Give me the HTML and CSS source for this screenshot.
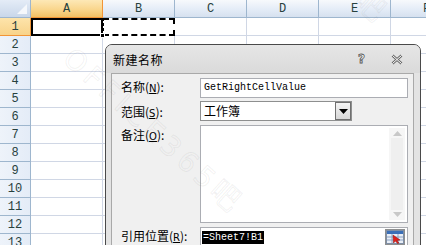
FILE: index.html
```html
<!DOCTYPE html>
<html>
<head>
<meta charset="utf-8">
<link rel="stylesheet" href="styles.css">
</head>
<body>
<div class="sheet">
  <div class="grid">
    <div class="corner"><span class="tri"></span></div>
    <div class="ch sel">A</div>
    <div class="ch">B</div>
    <div class="ch">C</div>
    <div class="ch">D</div>
    <div class="ch">E</div>
    <div class="ch">F</div>

    <div class="rh sel">1</div>
    <div class="c active"><span class="handle"></span></div>
    <div class="c copy"></div>
    <div class="c"></div><div class="c"></div><div class="c"></div><div class="c"></div>

    <div class="rh">2</div><div class="c"></div><div class="c"></div><div class="c"></div><div class="c"></div><div class="c"></div><div class="c"></div>
    <div class="rh">3</div><div class="c"></div><div class="c"></div><div class="c"></div><div class="c"></div><div class="c"></div><div class="c"></div>
    <div class="rh">4</div><div class="c"></div><div class="c"></div><div class="c"></div><div class="c"></div><div class="c"></div><div class="c"></div>
    <div class="rh">5</div><div class="c"></div><div class="c"></div><div class="c"></div><div class="c"></div><div class="c"></div><div class="c"></div>
    <div class="rh">6</div><div class="c"></div><div class="c"></div><div class="c"></div><div class="c"></div><div class="c"></div><div class="c"></div>
    <div class="rh">7</div><div class="c"></div><div class="c"></div><div class="c"></div><div class="c"></div><div class="c"></div><div class="c"></div>
    <div class="rh">8</div><div class="c"></div><div class="c"></div><div class="c"></div><div class="c"></div><div class="c"></div><div class="c"></div>
    <div class="rh">9</div><div class="c"></div><div class="c"></div><div class="c"></div><div class="c"></div><div class="c"></div><div class="c"></div>
    <div class="rh">10</div><div class="c"></div><div class="c"></div><div class="c"></div><div class="c"></div><div class="c"></div><div class="c"></div>
    <div class="rh">11</div><div class="c"></div><div class="c"></div><div class="c"></div><div class="c"></div><div class="c"></div><div class="c"></div>
    <div class="rh">12</div><div class="c"></div><div class="c"></div><div class="c"></div><div class="c"></div><div class="c"></div><div class="c"></div>
    <div class="rh">13</div><div class="c"></div><div class="c"></div><div class="c"></div><div class="c"></div><div class="c"></div><div class="c"></div>
  </div>

  <div class="dialog">
    <div class="titlebar">
      <span class="title">新建名称</span>
      <span class="tbtns">
        <span class="help">?</span>
        <svg class="close" width="12" height="11" viewBox="0 0 12 11">
          <path d="M1.5 1.5 L10.5 9.5 M10.5 1.5 L1.5 9.5" stroke="#666" stroke-width="2.6" fill="none"/>
          <path d="M1.5 1.5 L10.5 9.5 M10.5 1.5 L1.5 9.5" stroke="#fff" stroke-width="1" fill="none"/>
        </svg>
      </span>
    </div>
    <div class="frame">
      <div class="panel">
        <div class="row r-name">
          <span class="lbl">名称(<u>N</u>):</span>
          <div class="input name">GetRightCellValue</div>
        </div>
        <div class="row r-scope">
          <span class="lbl">范围(<u>S</u>):</span>
          <div class="combo">
            <span class="cval">工作簿</span>
            <span class="arrow"><svg width="9" height="5" viewBox="0 0 9 5"><path d="M0 0 H9 L4.5 5 Z" fill="#000"/></svg></span>
          </div>
        </div>
        <div class="row r-note">
          <span class="lbl">备注(<u>O</u>):</span>
          <div class="note">
            <div class="sb">
              <svg width="9" height="5" viewBox="0 0 9 5"><path d="M0 5 H9 L4.5 0 Z" fill="#c8c8c8"/></svg>
              <span class="sbtrack"></span>
              <svg width="9" height="5" viewBox="0 0 9 5"><path d="M0 0 H9 L4.5 5 Z" fill="#c8c8c8"/></svg>
            </div>
          </div>
        </div>
        <div class="row r-ref">
          <span class="lbl">引用位置(<u>R</u>):</span>
          <div class="input ref">
            <span class="seltext">=Sheet7!B1</span>
            <span class="refbtn">
              <svg width="18" height="14" viewBox="0 0 18 14">
                <rect x="0.5" y="0.5" width="17" height="13" fill="#e9eef6" stroke="#7f8fa6"/>
                <rect x="1" y="1" width="16" height="3" fill="#3a6fb8"/>
                <path d="M1 7 H17 M1 10 H17 M6 4 V13 M12 4 V13" stroke="#8aa2c4" stroke-width="1"/>
                <path d="M7 5 L14 10 L11 10.5 L13 13 L11.5 13.5 L9.5 11 L7.5 13 Z" fill="#e0201b" stroke="#8a1010" stroke-width="0.5"/>
              </svg>
            </span>
          </div>
        </div>
      </div>
    </div>
  </div>

  <div class="watermark wm1">OFFICE365吧</div>
  <div class="watermark wm2">OFFICE365吧</div>
</div>
</body>
</html>
```

FILE: styles.css
```css
* { box-sizing: border-box; }
html, body { margin: 0; padding: 0; }
body {
  width: 426px;
  height: 245px;
  overflow: hidden;
  background: #fff;
  font-family: "Noto Sans CJK SC", "DejaVu Sans", sans-serif;
}
.sheet {
  position: relative;
  width: 426px;
  height: 245px;
  overflow: hidden;
}
.grid {
  display: grid;
  grid-template-columns: 31px repeat(6, 72px);
  grid-template-rows: 18px repeat(13, 18px);
}
.corner {
  position: relative;
  background: linear-gradient(#e4ecf7, #c9d7ea);
  border-right: 1px solid #9eb6ce;
  border-bottom: 1px solid #9eb6ce;
}
.tri {
  position: absolute;
  right: 3px;
  bottom: 3px;
  width: 0;
  height: 0;
  border-left: 10px solid transparent;
  border-bottom: 10px solid #f5f8fc;
}
.ch {
  background: linear-gradient(#f7f9fc 0%, #e4ecf7 55%, #d6e1ef 100%);
  border-right: 1px solid #9eb6ce;
  border-bottom: 1px solid #9eb6ce;
  font-family: "Liberation Mono", monospace;
  font-size: 12px;
  color: #27413e;
  display: flex;
  align-items: center;
  justify-content: center;
}
.ch.sel {
  background: linear-gradient(#fde8b6 0%, #f9d68d 55%, #f2c064 100%);
  border-bottom: 1px solid #f29536;
  border-right: 1px solid #f29536;
}
.rh {
  background: linear-gradient(90deg, #eef3fa, #e4ecf7);
  border-right: 1px solid #9eb6ce;
  border-bottom: 1px solid #9eb6ce;
  font-family: "Liberation Mono", monospace;
  font-size: 12px;
  color: #27413e;
  display: flex;
  align-items: center;
  justify-content: center;
}
.rh.sel {
  background: linear-gradient(#fde4ab, #f8d38a);
  border-right: 1px solid #f29536;
  border-bottom: 1px solid #f29536;
}
.c {
  border-right: 1px solid #d0d7e5;
  border-bottom: 1px solid #d0d7e5;
}
.c.active {
  position: relative;
  border: 2px solid #000;
}
.handle {
  position: absolute;
  right: -4px;
  bottom: -4px;
  width: 5px;
  height: 5px;
  background: #000;
  border: 1px solid #fff;
}
.c.copy {
  border: 2px dashed #000;
  border-left: 1px dashed #000;
}
.watermark {
  position: absolute;
  transform: rotate(42deg);
  transform-origin: 0 0;
  font-family: "DejaVu Sans", sans-serif;
  font-size: 28px;
  letter-spacing: 5px;
  white-space: nowrap;
  color: transparent;
  -webkit-text-stroke: 1px rgba(110, 110, 110, 0.09);
  pointer-events: none;
  z-index: 3;
}
.wm1 { left: 80px; top: 40px; }
.wm2 { left: 225px; top: -150px; }
.dialog {
  position: absolute;
  left: 105px;
  top: 44px;
  width: 316px;
  height: 220px;
  border: 1px solid #4a4a4a;
  border-radius: 7px 7px 0 0;
  background: #e3e3e3;
  z-index: 2;
  display: flex;
  flex-direction: column;
}
.titlebar {
  height: 28px;
  display: flex;
  align-items: center;
  justify-content: space-between;
  padding: 0 17px 0 7px;
  background: linear-gradient(#e6e6e6, #dadada);
  border-radius: 6px 6px 0 0;
}
.title {
  font-size: 12px;
  color: #000;
  letter-spacing: 0.5px;
}
.tbtns {
  display: flex;
  align-items: center;
  gap: 26px;
}
.help {
  font-family: "DejaVu Sans", sans-serif;
  font-size: 12px;
  font-weight: bold;
  color: #fff;
  -webkit-text-stroke: 0.8px #555;
}
.close { display: block; }
.frame {
  flex: 1;
  padding: 0 6px 0 5px;
  background: #e3e3e3;
}
.panel {
  height: 100%;
  background: #f0f0f0;
  border-top: 1px solid #a9a9a9;
  border-left: 1px solid #a9a9a9;
  border-right: 1px solid #a9a9a9;
  padding: 4px 5px 0 9px;
  display: flex;
  flex-direction: column;
}
.row {
  display: flex;
  align-items: flex-start;
}
.lbl {
  width: 79px;
  font-size: 12px;
  line-height: 16px;
  color: #000;
  white-space: nowrap;
}
.lbl u {
  text-decoration: underline;
  font-family: "DejaVu Sans", sans-serif;
  font-size: 10px;
}
.r-name { height: 23px; }
.r-name .lbl { padding-top: 1px; }
.input {
  flex: 1;
  height: 20px;
  background: #fff;
  border: 1px solid #abadb3;
  font-family: "Liberation Mono", monospace;
  font-size: 10px;
  line-height: 18px;
  color: #000;
  padding-left: 3px;
}
.r-scope { height: 24px; }
.r-scope .lbl { padding-top: 3px; }
.combo {
  width: 152px;
  height: 20px;
  background: #fff;
  border: 1px solid #8e8f8f;
  display: flex;
  align-items: stretch;
  justify-content: space-between;
}
.cval {
  font-size: 12px;
  line-height: 18px;
  padding-left: 3px;
}
.arrow {
  width: 16px;
  display: flex;
  align-items: center;
  justify-content: center;
  background: linear-gradient(#f4f4f4, #d7d7d7);
  border: 1px solid #707070;
}
.r-note { height: 102px; }
.r-note .lbl { padding-top: 2px; }
.note {
  flex: 1;
  height: 98px;
  background: #fff;
  border: 1px solid #abadb3;
  display: flex;
  justify-content: flex-end;
  padding: 2px 2px 2px 0;
}
.sb {
  width: 16px;
  display: flex;
  flex-direction: column;
  align-items: center;
  background: #f6f6f6;
  padding: 3px 0;
  gap: 2px;
}
.sbtrack {
  flex: 1;
  width: 12px;
  background: #efefef;
}
.r-ref .lbl { padding-top: 1px; }
.ref {
  display: flex;
  align-items: center;
  justify-content: space-between;
  padding-left: 1px;
  padding-right: 2px;
}
.seltext {
  background: #000;
  color: #fff;
  line-height: 13px;
  padding: 0 1px;
}
.refbtn {
  display: flex;
  align-items: center;
  justify-content: center;
  width: 20px;
  height: 16px;
  background: linear-gradient(#f7f7f7, #dcdcdc);
  border: 1px solid #8e8f8f;
}
```
